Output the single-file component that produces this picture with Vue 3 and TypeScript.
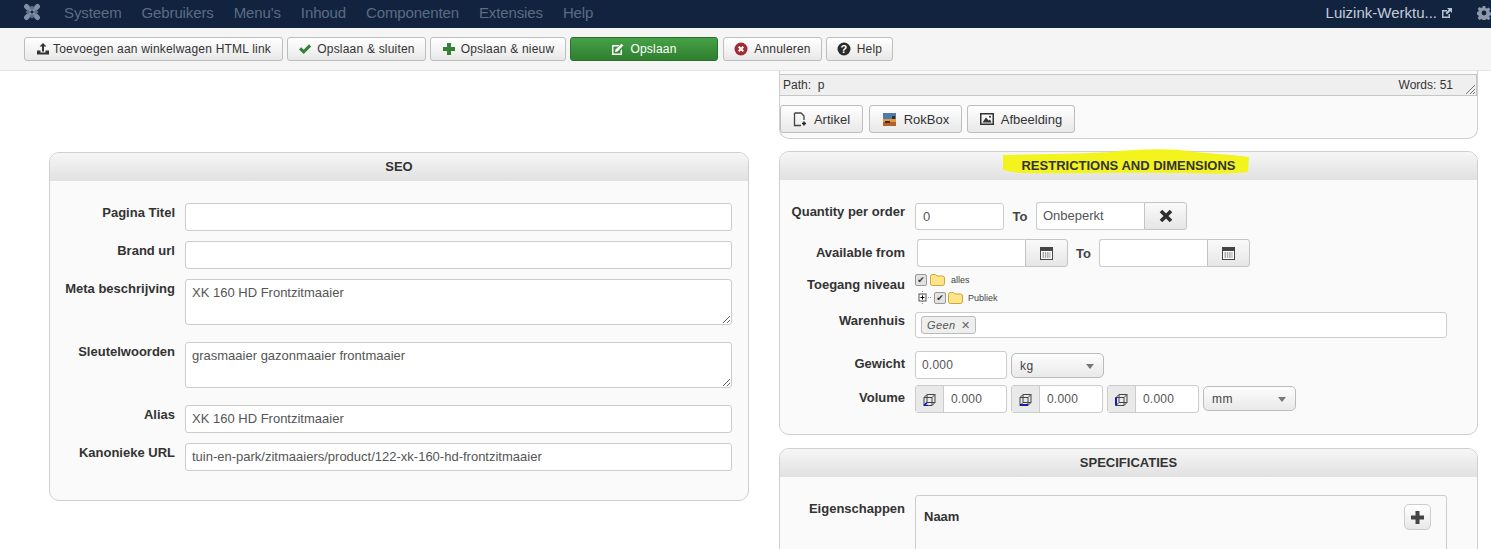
<script setup lang="ts">
const menu: string[] = ['Systeem', 'Gebruikers', "Menu's", 'Inhoud', 'Componenten', 'Extensies', 'Help']
const seoRows: { label: string; value: string; area?: boolean }[] = [
  { label: 'Pagina Titel', value: '' },
  { label: 'Brand url', value: '' },
  { label: 'Meta beschrijving', value: 'XK 160 HD Frontzitmaaier', area: true },
  { label: 'Sleutelwoorden', value: 'grasmaaier gazonmaaier frontmaaier', area: true },
  { label: 'Alias', value: 'XK 160 HD Frontzitmaaier' },
  { label: 'Kanonieke URL', value: 'tuin-en-park/zitmaaiers/product/122-xk-160-hd-frontzitmaaier' },
]
</script>

<template>
  <div class="page">
    <header class="topbar">
      <svg class="logo" width="18" height="18" viewBox="0 0 18 18">
        <path d="M3.500 3.500L14.500 14.500M14.500 3.500L3.500 14.500" stroke="#7f8ea3" stroke-width="5" stroke-linecap="round" />
        <path d="M9 2.500L6.500 5 9 7 11.500 5zM9 15.500L6.500 13 9 11 11.500 13zM2.500 9L5 6.500 7 9 5 11.500zM15.500 9L13 6.500 11 9 13 11.500z" fill="#5f6f86" />
        <rect x="7.700" y="7.700" width="2.600" height="2.600" fill="#11233f" transform="rotate(45 9 9)" />
      </svg>
      <nav class="menu">
        <span v-for="m in menu" :key="m">{{ m }}</span>
      </nav>
      <div class="user">
        <span class="site">Luizink-Werktu...</span>
        <svg width="12" height="12" viewBox="0 0 12 12" class="ext">
          <path d="M1 3h5v1.500H2.500v5h5V7H9v4H1z" fill="#b9c2cf" />
          <path d="M6 1h5v5L9.300 4.300 6 7.500 4.500 6 7.700 2.700z" fill="#b9c2cf" />
        </svg>
        <svg width="14" height="14" viewBox="0 0 14 14" class="gear">
          <path fill="#8d99aa" fill-rule="evenodd" d="M5.800 0h2.400l.4 2 1.300.6 1.700-1.100 1.700 1.700-1.100 1.700.6 1.300 2 .4v2.400l-2 .4-.6 1.300 1.100 1.700-1.700 1.700-1.700-1.100-1.300.6-.4 2H5.800l-.4-2-1.300-.6-1.700 1.100L.7 11.900l1.100-1.700-.6-1.300-2-.4V6.100l2-.4.6-1.300L.7 2.700 2.400 1l1.700 1.100 1.300-.6zM7 4.600a2.400 2.400 0 1 0 0 4.800 2.400 2.400 0 0 0 0-4.800z" />
        </svg>
      </div>
    </header>

    <div class="toolbar">
      <button class="btn first">
        <svg width="14" height="14" viewBox="0 0 14 14"><path fill="#333" d="M7 1l3.500 3.500H8V9.500H6V4.500H3.500zM1 8.500h3.500V10.500h5V8.500H13V12.500H1z" /></svg>
        <span>Toevoegen aan winkelwagen HTML link</span>
      </button>
      <button class="btn second">
        <svg width="14" height="12" viewBox="0 0 14 12"><path fill="#378137" d="M1 6.500l2.200-2.200 2.500 2.500L11 1.200l2.200 2.200-7.500 7.600z" /></svg>
        <span>Opslaan &amp; sluiten</span>
      </button>
      <button class="btn third">
        <svg width="14" height="14" viewBox="0 0 14 14"><path fill="#378137" d="M5 1h4v4h4v4H9v4H5V9H1V5h4z" /></svg>
        <span>Opslaan &amp; nieuw</span>
      </button>
      <button class="btn save">
        <svg width="13" height="13" viewBox="0 0 13 13"><path fill="#fff" fill-rule="evenodd" d="M1 2h7.500L7 3.500H2.500v7h7V7.500L11 6v6H1z" /><path fill="#fff" d="M4.500 6.500L10.500.8l1.800 1.800-5.800 5.900-2.400.5z" /></svg>
        <span>Opslaan</span>
      </button>
      <button class="btn cancel">
        <svg width="14" height="14" viewBox="0 0 14 14"><circle cx="7" cy="7" r="6.500" fill="#a22a35" /><path d="M4.700 4.700l4.600 4.600M9.300 4.700l-4.600 4.600" stroke="#fff" stroke-width="2" /></svg>
        <span>Annuleren</span>
      </button>
      <button class="btn help">
        <svg width="14" height="14" viewBox="0 0 14 14"><circle cx="7" cy="7" r="6.500" fill="#2b2b2b" /><text x="7" y="10.800" text-anchor="middle" class="q">?</text></svg>
        <span>Help</span>
      </button>
    </div>

    <main class="columns">
      <div class="col-left">
        <section class="panel seo">
          <h3 class="panel-head">SEO</h3>
          <div class="seo-body">
            <div v-for="r in seoRows" :key="r.label" class="seo-row" :class="{ tall: r.area }">
              <label class="lbl seo-lbl">{{ r.label }}</label>
              <div class="field seo-field" :class="{ area: r.area }">
                {{ r.value }}
                <svg v-if="r.area" class="grip" width="10" height="10" viewBox="0 0 10 10"><path d="M9 2L2 9M9 6L6 9" stroke="#666" /></svg>
              </div>
            </div>
          </div>
        </section>
      </div>

      <div class="col-right">
        <section class="panel editor">
          <div class="pathbar">
            <span>Path:&nbsp; p</span>
            <span class="words">Words: 51</span>
            <svg class="grip2" width="12" height="12" viewBox="0 0 12 12"><path d="M11 2L2 11M11 6L6 11M11 9L9 11" stroke="#777" /></svg>
          </div>
          <div class="ed-buttons">
            <button class="btn ed">
              <svg width="14" height="15" viewBox="0 0 14 15"><path d="M1.500 1h6.500l3 3v4M8 13.500H1.500V1" fill="none" stroke="#444" stroke-width="1.300" /><path d="M11 9.500v4M9 11.500h4" stroke="#222" stroke-width="1.600" /></svg>
              <span>Artikel</span>
            </button>
            <button class="btn ed">
              <svg width="15" height="15" viewBox="0 0 15 15">
                <rect x="1" y="1" width="13" height="7" fill="#4d7da8" />
                <rect x="1" y="7" width="13" height="3" fill="#e5983a" />
                <rect x="1" y="10" width="13" height="4" fill="#b5622a" />
                <path d="M3 9h5v2H3zM10 4h3v3h-3z" fill="#3a2c20" />
              </svg>
              <span>RokBox</span>
            </button>
            <button class="btn ed">
              <svg width="14" height="12" viewBox="0 0 14 12"><path fill-rule="evenodd" fill="#333" d="M0 0h14v12H0zM1.500 1.500v9h11v-9z" /><path fill="#333" d="M2.500 9.500L6 4.500l2.500 3 1.500-1 1.500 3z" /><circle cx="10" cy="3.800" r="1" fill="#333" /></svg>
              <span>Afbeelding</span>
            </button>
          </div>
        </section>

        <section class="panel restrict">
          <h3 class="panel-head marked-head">
            <svg class="marker" width="260" height="32" viewBox="0 0 260 32">
              <path d="M3 9 C40 8 80 8 110 6 C140 3 170 2 195 6 C215 8 235 9 249 11 L248 26 C225 29 200 27 170 27 C120 26 60 28 25 27 C15 27 8 25 3 24 Z" fill="#f3f31e" />
            </svg>
            <span class="marked">RESTRICTIONS AND DIMENSIONS</span>
          </h3>
          <div class="r-body">
            <div class="r-row qty">
              <label class="lbl r-lbl">Quantity per order</label>
              <div class="field w89">0</div>
              <span class="to">To</span>
              <div class="group">
                <div class="field w108 joined">Onbeperkt</div>
                <button class="addon-btn">
                  <svg width="14" height="14" viewBox="0 0 14 14"><path d="M2 2l10 10M12 2L2 12" stroke="#2e2e2e" stroke-width="3.600" /></svg>
                </button>
              </div>
            </div>
            <div class="r-row avail">
              <label class="lbl r-lbl">Available from</label>
              <div class="group date-first">
                <div class="field w108 joined"></div>
                <button class="addon-btn">
                  <svg width="13" height="13" viewBox="0 0 13 13"><rect x=".5" y=".5" width="12" height="12" fill="#fff" stroke="#444" /><rect x="1" y="1" width="11" height="3" fill="#444" /><path d="M2.500 6h8M2.500 8h8M2.500 10h8" stroke="#555" stroke-dasharray="1.500 .8" /></svg>
                </button>
              </div>
              <span class="to to2">To</span>
              <div class="group">
                <div class="field w108 joined"></div>
                <button class="addon-btn">
                  <svg width="13" height="13" viewBox="0 0 13 13"><rect x=".5" y=".5" width="12" height="12" fill="#fff" stroke="#444" /><rect x="1" y="1" width="11" height="3" fill="#444" /><path d="M2.500 6h8M2.500 8h8M2.500 10h8" stroke="#555" stroke-dasharray="1.500 .8" /></svg>
                </button>
              </div>
            </div>
            <div class="r-row tree-row">
              <label class="lbl r-lbl">Toegang niveau</label>
              <div class="tree">
                <div class="tree-line">
                  <span class="chk">✔</span>
                  <svg width="15" height="12" viewBox="0 0 15 12"><path d="M.5 2.500q0-2 2-2h3l1.500 1.500h5.500q2 0 2 2v5.500q0 2-2 2h-10q-2 0-2-2z" fill="#fde488" stroke="#c9a53a" /></svg>
                  <span class="tree-txt">alles</span>
                </div>
                <div class="tree-line sub">
                  <svg width="14" height="14" viewBox="0 0 14 14"><path d="M4.500 0v3M4.500 10v4" stroke="#888" stroke-dasharray="1 1" /><rect x="1" y="3" width="7" height="7" fill="#fff" stroke="#555" /><path d="M2.500 6.500h4M4.500 4.500v4" stroke="#000" /><path d="M8 6.500h6" stroke="#999" stroke-dasharray="1 1" /></svg>
                  <span class="chk">✔</span>
                  <svg width="15" height="12" viewBox="0 0 15 12"><path d="M.5 2.500q0-2 2-2h3l1.500 1.500h5.500q2 0 2 2v5.500q0 2-2 2h-10q-2 0-2-2z" fill="#fde488" stroke="#c9a53a" /></svg>
                  <span class="tree-txt">Publiek</span>
                </div>
              </div>
            </div>
            <div class="r-row ware">
              <label class="lbl r-lbl">Warenhuis</label>
              <div class="field wide">
                <span class="tag"><em>Geen</em><i>✕</i></span>
              </div>
            </div>
            <div class="r-row weight">
              <label class="lbl r-lbl">Gewicht</label>
              <div class="field w92 num">0.000</div>
              <div class="sel w93">kg<b></b></div>
            </div>
            <div class="r-row volume">
              <label class="lbl r-lbl">Volume</label>
              <div class="vols">
                <div v-for="n in 3" :key="n" class="vol">
                  <span class="cube">
                    <svg width="13" height="13" viewBox="0 0 13 13" fill="none">
                      <path d="M4 1.500h8v8H4zM1 4.500h8v8H1zM1 4.500l3-3M9 4.500l3-3M9 12.500l3-3M1 12.500l3-3" stroke="#444" />
                      <path v-if="n === 1" d="M1 12.500h4M1 12.500l3-3" stroke="#1a1ab0" stroke-width="1.600" />
                      <path v-if="n === 2" d="M1 12h8" stroke="#1a1ab0" stroke-width="2" />
                      <path v-if="n === 3" d="M1 4.500v8" stroke="#1a1ab0" stroke-width="2" />
                    </svg>
                  </span>
                  <span class="vol-val">0.000</span>
                </div>
                <div class="sel w93 mm">mm<b></b></div>
              </div>
            </div>
          </div>
        </section>

        <section class="panel specs">
          <h3 class="panel-head">SPECIFICATIES</h3>
          <div class="s-body">
            <label class="lbl r-lbl eig">Eigenschappen</label>
            <div class="s-box">
              <strong>Naam</strong>
              <button class="plus">
                <svg width="13" height="13" viewBox="0 0 13 13"><path fill="#444" d="M4.500 0h4v4.500H13v4H8.500V13h-4V8.500H0v-4h4.500z" /></svg>
              </button>
            </div>
          </div>
        </section>
      </div>
    </main>
  </div>
</template>

<style>
html, body { margin: 0; background: #fff; }
</style>

<style scoped>
.page {
  width: 1491px;
  height: 549px;
  overflow: hidden;
  font-family: "Liberation Sans", Arial, sans-serif;
  color: #333;
  font-size: 12px;
  background: #fff;
}
.topbar {
  height: 28px;
  background: #11233f;
  display: flex;
  align-items: center;
  padding-left: 23px;
}
.logo { flex: none; margin-bottom: 4px; }
.menu {
  display: flex;
  gap: 20px;
  margin-left: 23px;
  color: #5d6c82;
  font-size: 15px;
  letter-spacing: -0.12px;
  margin-bottom: 3px;
}
.user {
  margin-left: auto;
  display: flex;
  align-items: center;
  color: #c3ccd8;
  font-size: 15px;
  margin-bottom: 3px;
}
.ext { margin-left: 4px; }
.gear { margin-left: 24px; }
.toolbar {
  height: 43px;
  box-sizing: border-box;
  background: #f5f5f5;
  border-bottom: 1px solid #e4e4e4;
  display: flex;
  align-items: flex-start;
  padding: 9px 0 0 24px;
  gap: 4px;
}
.btn {
  height: 24px;
  box-sizing: border-box;
  border: 1px solid #bdbdbd;
  border-radius: 3px;
  background: linear-gradient(#ffffff, #e8e8e8);
  display: flex;
  align-items: center;
  justify-content: center;
  gap: 5px;
  padding: 0;
  font: 12px "Liberation Sans", Arial, sans-serif;
  color: #333;
  letter-spacing: 0.2px;
}
.first { width: 259px; gap: 3px; }
.second { width: 139px; }
.third { width: 136px; }
.save {
  width: 148px;
  color: #fff;
  gap: 6px;
  background: linear-gradient(#46a146, #2f7f2f);
  border-color: #2b6f2b;
}
.cancel { width: 99px; margin-left: 1px; gap: 6px; }
.help { width: 67px; gap: 6px; }
.q { font: bold 11px "Liberation Sans", Arial, sans-serif; fill: #fff; }

.columns {
  display: grid;
  grid-template-columns: 700px 699px;
  column-gap: 30px;
  padding-left: 49px;
}
.panel {
  background: #fafafa;
  border: 1px solid #cfcfcf;
  border-radius: 10px;
  box-sizing: border-box;
}
.panel-head {
  margin: 0;
  height: 28px;
  box-sizing: border-box;
  line-height: 27px;
  text-align: center;
  font-size: 13px;
  font-weight: bold;
  color: #333;
  background: linear-gradient(#f6f6f6, #e1e1e1);
  border-radius: 9px 9px 0 0;
}
.col-left { padding-top: 81px; }
.seo { height: 349px; }
.seo-body { padding-top: 22px; }
.seo-row {
  display: flex;
  align-items: flex-start;
  margin-bottom: 10px;
}
.seo-row.tall { margin-bottom: 17px; }
.lbl {
  font-weight: bold;
  font-size: 13px;
  color: #333;
  text-align: right;
  white-space: nowrap;
  line-height: 16px;
}
.seo-lbl { width: 125px; margin-right: 10px; padding-top: 2px; }
.field {
  height: 28px;
  box-sizing: border-box;
  background: #fff;
  border: 1px solid #ccc;
  border-radius: 3px;
  padding: 0 6px;
  line-height: 26px;
  color: #555;
  font-size: 13px;
  position: relative;
}
.seo-field { width: 547px; }
.seo-field.area { height: 46px; line-height: 25px; }
.grip { position: absolute; right: 0; bottom: 0; }

.editor {
  height: 68px;
  margin-bottom: 12px;
  border-top: none;
  border-radius: 0 0 10px 10px;
  padding-top: 3px;
}
.pathbar {
  height: 22px;
  background: #efefef;
  border: solid #c6c6c6;
  border-width: 1px 1px 1px 0;
  display: flex;
  align-items: center;
  justify-content: space-between;
  padding: 0 23px 0 3px;
  font-size: 12px;
  color: #333;
  position: relative;
  box-sizing: border-box;
}
.grip2 { position: absolute; right: 0; bottom: 0; }
.ed-buttons {
  display: flex;
  gap: 6px;
  margin-top: 9px;
}
.ed {
  height: 28px;
  font-size: 13px;
  gap: 7px;
  letter-spacing: 0;
}
.ed:nth-child(1) { width: 83px; }
.ed:nth-child(2) { width: 93px; }
.ed:nth-child(3) { width: 108px; margin-left: -1px; }

.restrict { height: 284px; }
.r-body { padding-top: 22px; }
.r-row { display: flex; align-items: flex-start; }
.r-lbl { width: 125px; margin-right: 10px; padding-top: 2px; }
.w89 { width: 89px; height: 27px; margin-top: 1px; line-height: 25px; padding-left: 7px; }
.w108 { width: 108px; }
.to {
  width: 32px;
  text-align: center;
  font-weight: bold;
  font-size: 13px;
  line-height: 29px;
  color: #444;
}
.group { display: flex; }
.joined { border-radius: 3px 0 0 3px; border-right: none; }
.addon-btn {
  width: 43px;
  height: 28px;
  box-sizing: border-box;
  border: 1px solid #c4c4c4;
  border-radius: 0 3px 3px 0;
  background: linear-gradient(#fafafa, #e6e6e6);
  display: flex;
  align-items: center;
  justify-content: center;
  padding: 0;
}
.avail { margin-top: 8px; }
.date-first { margin-left: 2px; }
.avail .r-lbl { padding-top: 6px; }
.to2 { width: 31px; }
.tree-row { margin-top: 3px; height: 42px; }
.tree-row .r-lbl { padding-top: 6px; }
.tree { padding-top: 0; }
.tree-line { display: flex; align-items: center; gap: 3px; height: 18px; }
.tree-line.sub { padding-left: 3px; gap: 2px; }
.chk {
  width: 10px;
  height: 10px;
  border: 1px solid #999;
  border-radius: 2px;
  background: #e3e3e3;
  font-size: 9px;
  line-height: 10px;
  text-align: center;
  color: #333;
  font-family: "DejaVu Sans", sans-serif;
}
.tree-txt { font-size: 9px; margin-left: 3px; color: #444; }
.ware { margin-top: -1px; }
.ware .r-lbl { padding-top: 1px; }
.wide { width: 532px; height: 26px; padding: 3px 5px; }
.tag {
  display: inline-flex;
  align-items: center;
  height: 18px;
  box-sizing: border-box;
  width: 55px;
  border: 1px solid #bbb;
  border-radius: 3px;
  background: #eee;
  padding-left: 5px;
  gap: 5px;
  vertical-align: top;
  font-size: 11px;
  line-height: 16px;
}
.tag em { letter-spacing: .4px; color: #555; }
.tag i { font-style: normal; font-size: 11px; color: #666; }
.weight { margin-top: 13px; }
.weight .r-lbl { padding-top: 5px; }
.w92 { width: 92px; }
.num { font-size: 12px; letter-spacing: .2px; }
.sel {
  height: 25px;
  margin-top: 2px;
  margin-left: 4px;
  box-sizing: border-box;
  border: 1px solid #bbb;
  border-radius: 5px;
  background: linear-gradient(#fdfdfd, #e9e9e9);
  padding-left: 8px;
  line-height: 24px;
  font-size: 12px;
  color: #444;
  letter-spacing: .5px;
  position: relative;
}
.sel b {
  position: absolute;
  right: 9px;
  top: 10px;
  border: 4px solid transparent;
  border-top: 5px solid #777;
  border-bottom: none;
}
.w93 { width: 93px; }
.volume { margin-top: 6px; }
.volume .r-lbl { padding-top: 5px; }
.vols { display: flex; gap: 4px; }
.vol {
  width: 92px;
  height: 28px;
  box-sizing: border-box;
  display: flex;
  border: 1px solid #ccc;
  border-radius: 3px;
  background: #fff;
}
.cube {
  width: 27px;
  background: #e9e9e9;
  border-right: 1px solid #ccc;
  display: flex;
  align-items: center;
  justify-content: center;
}
.vol-val { padding-left: 7px; line-height: 26px; color: #555; letter-spacing: .2px; }
.mm { margin-top: 1px; margin-left: 0; }

.specs { height: 140px; margin-top: 13px; }
.s-body { display: flex; padding-top: 18px; }
.eig { padding-top: 6px; font-weight: bold; }
.s-box {
  width: 532px;
  height: 100px;
  box-sizing: border-box;
  border: 1px solid #ccc;
  border-radius: 3px;
  display: flex;
  justify-content: space-between;
  padding: 8px 15px 0 8px;
}
.s-box strong { font-size: 13px; line-height: 26px; }
.plus {
  width: 27px;
  height: 26px;
  box-sizing: border-box;
  border: 1px solid #ccc;
  border-radius: 5px;
  background: linear-gradient(#fff, #e8e8e8);
  padding: 0;
  display: flex;
  align-items: center;
  justify-content: center;
}
.marked-head { position: relative; }
.marker {
  position: absolute;
  left: 220px;
  top: -6px;
}
.marked { position: relative; }
</style>
